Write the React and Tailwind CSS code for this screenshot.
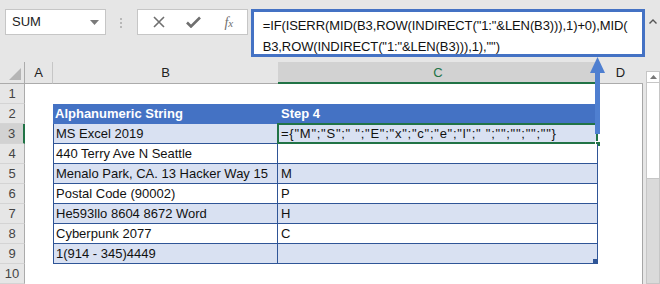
import React from 'react';

const rows = [
  { n: 1 },
  { n: 2, b: 'Alphanumeric String', c: 'Step 4', head: true },
  { n: 3, b: 'MS Excel 2019', c: '={"M";"S";" ";"E";"x";"c";"e";"l";" ";"";"";"";""}', band: true },
  { n: 4, b: '440 Terry Ave N Seattle', c: '' },
  { n: 5, b: 'Menalo Park, CA. 13 Hacker Way 15', c: 'M', band: true },
  { n: 6, b: 'Postal Code (90002)', c: 'P' },
  { n: 7, b: 'He593llo 8604 8672 Word', c: 'H', band: true },
  { n: 8, b: 'Cyberpunk 2077', c: 'C' },
  { n: 9, b: '1(914 - 345)4449', c: '', band: true },
  { n: 10 },
];

function Toolbar() {
  return (
    <div className="flex h-[62px] items-start pt-[9px] pl-[5px]">
      {/* name box */}
      <div className="flex h-[26px] w-[101px] items-center justify-between border border-[#c6c6c6] bg-white pl-[6px] pr-[6px] text-[13px] text-[#222]">
        <span>SUM</span>
        <svg width="9" height="5" viewBox="0 0 9 5"><path d="M0 0h9L4.5 5z" fill="#7a7a7a" /></svg>
      </div>
      <div className="flex w-[31px] flex-col items-center gap-[2px] pt-[9px]">
        <span className="h-[2px] w-[2px] bg-[#b8b8b8]" />
        <span className="h-[2px] w-[2px] bg-[#b8b8b8]" />
        <span className="h-[2px] w-[2px] bg-[#b8b8b8]" />
      </div>
      {/* formula buttons */}
      <div className="flex h-[26px] w-[111px] items-center border border-[#c6c6c6] bg-white">
        <div className="flex w-[38px] justify-center pl-[4px]">
          <svg width="12" height="12" viewBox="0 0 12 12"><path d="M1 1l10 10M11 1L1 11" stroke="#6f6f6f" strokeWidth="1.6" /></svg>
        </div>
        <div className="flex w-[36px] justify-center">
          <svg width="15" height="12" viewBox="0 0 15 12"><path d="M1 6.5l4 4L14 1.5" stroke="#6f6f6f" strokeWidth="2.6" fill="none" /></svg>
        </div>
        <div className="flex w-[34px] justify-center font-['Liberation_Serif',serif] text-[14px] italic text-[#6f6f6f]">
          <span>f<span className="text-[11px]">x</span></span>
        </div>
      </div>
      {/* formula box */}
      <div className="ml-[3px] h-[48px] w-[395px] border-[3px] border-[#4472c4] bg-white pl-[9px] pt-[3px] text-[13px] leading-[21px] tracking-[-0.1px] text-[#111]">
        <div>=IF(ISERR(MID(B3,ROW(INDIRECT("1:"&amp;LEN(B3))),1)+0),MID(</div>
        <div>B3,ROW(INDIRECT("1:"&amp;LEN(B3))),1),"")</div>
      </div>
      <div className="flex w-[15px] justify-center pt-[10px]">
        <svg width="8" height="5" viewBox="0 0 8 5"><path d="M0.5 4.5L4 1l3.5 3.5" stroke="#555" strokeWidth="1.4" fill="none" /></svg>
      </div>
    </div>
  );
}

function ColHeaders() {
  return (
    <>
      <div className="relative h-[22px] border-r border-b border-[#ababab] bg-[#e6e6e6]">
        <svg className="absolute right-[3px] bottom-[3px]" width="12" height="12" viewBox="0 0 12 12"><path d="M12 0V12H0z" fill="#b5b5b5" /></svg>
      </div>
      <div className="flex h-[22px] items-center justify-center border-r border-b border-[#c6c6c6] border-b-[#ababab] bg-[#e6e6e6] text-[13px] text-[#222]">A</div>
      <div className="flex h-[22px] items-center justify-center border-b border-[#ababab] bg-[#e6e6e6] text-[13px] text-[#222]">B</div>
      <div className="flex h-[22px] items-center justify-center border-b-2 border-[#217346] bg-[#d2d2d2] pt-[1px] text-[13px] text-[#217346]">C</div>
      <div className="flex h-[22px] items-center justify-center border-b border-[#ababab] bg-[#e6e6e6] text-[13px] text-[#222]">D</div>
    </>
  );
}

function Row({ r }) {
  const inTable = r.b !== undefined;
  const fill = r.head ? 'bg-[#4472c4]' : r.band ? 'bg-[#d9e1f2]' : 'bg-white';
  const text = r.head ? 'font-bold text-white' : 'text-[#111]';
  const sel = r.n === 3;
  return (
    <>
      <div
        className={`flex h-[20px] items-center justify-center border-b border-b-[#d4d4d4] text-[13px] text-[#444] ${
          sel ? 'border-r-2 border-r-[#217346] bg-[#d2d2d2]' : 'border-r border-r-[#ababab] bg-[#e6e6e6]'
        }`}
      >
        {r.n}
      </div>
      <div className="h-[20px] bg-white" />
      {inTable ? (
        <div
          className={`flex h-[20px] items-center overflow-hidden whitespace-nowrap pl-[2px] text-[13px] ${fill} ${text} ${
            r.head ? '' : 'border-l border-r border-b border-[#2f5597]'
          }`}
        >
          {r.b}
        </div>
      ) : (
        <div className="h-[20px] bg-white" />
      )}
      {inTable ? (
        <div
          className={`relative flex h-[20px] items-center whitespace-nowrap pl-[3px] text-[13px] ${fill} ${text} ${
            r.head ? '' : 'border-r border-b border-[#2f5597]'
          } ${sel ? 'tracking-[0.75px]' : ''}`}
        >
          {r.c}
          {sel && (
            <>
              <div className="absolute -top-[1px] -left-[1px] -right-[1px] -bottom-[1px] border-2 border-[#217346]" />
              <div className="absolute -right-[4px] -bottom-[4px] h-[6px] w-[6px] border border-white bg-[#217346]" />
            </>
          )}
          {r.n === 9 && <div className="absolute right-0 bottom-0 h-[4px] w-[4px] bg-[#2f5597]" />}
        </div>
      ) : (
        <div className="h-[20px] bg-white" />
      )}
      <div className="h-[20px] border-r border-[#a6a6a6] bg-white" />
    </>
  );
}

function Scrollbar() {
  return (
    <div className="flex w-[17px] flex-col bg-[#e6e6e6] pl-[3px] pt-[9px]">
      <div className="flex flex-1 flex-col border border-[#c6c6c6] bg-white">
        <div className="flex h-[11px] items-center justify-center border-b border-[#c6c6c6]">
          <svg width="7" height="4" viewBox="0 0 7 4"><path d="M0 4L3.5 0 7 4z" fill="#777" /></svg>
        </div>
        <div className="h-[96px] border-b border-[#c6c6c6] bg-white" />
        <div className="flex-1 bg-[#dadada]" />
      </div>
    </div>
  );
}

export default function App() {
  return (
    <div className="relative h-[284px] w-[660px] overflow-hidden bg-[#e6e6e6] font-['Liberation_Sans',Arial,sans-serif]">
      <Toolbar />
      <div className="flex">
        <div className="grid w-[643px] grid-cols-[25px_28px_225px_320px_45px] bg-white">
          <ColHeaders />
          {rows.map((r) => (
            <Row key={r.n} r={r} />
          ))}
        </div>
        <Scrollbar />
      </div>
      {/* annotation arrow */}
      <svg className="absolute left-[588px] top-[56px]" width="20" height="78" viewBox="0 0 20 78">
        <rect x="7" y="14" width="5" height="64" fill="#4f7fd0" />
        <path d="M2 17L9.5 1 17 17z" fill="#4f7fd0" />
      </svg>
    </div>
  );
}
